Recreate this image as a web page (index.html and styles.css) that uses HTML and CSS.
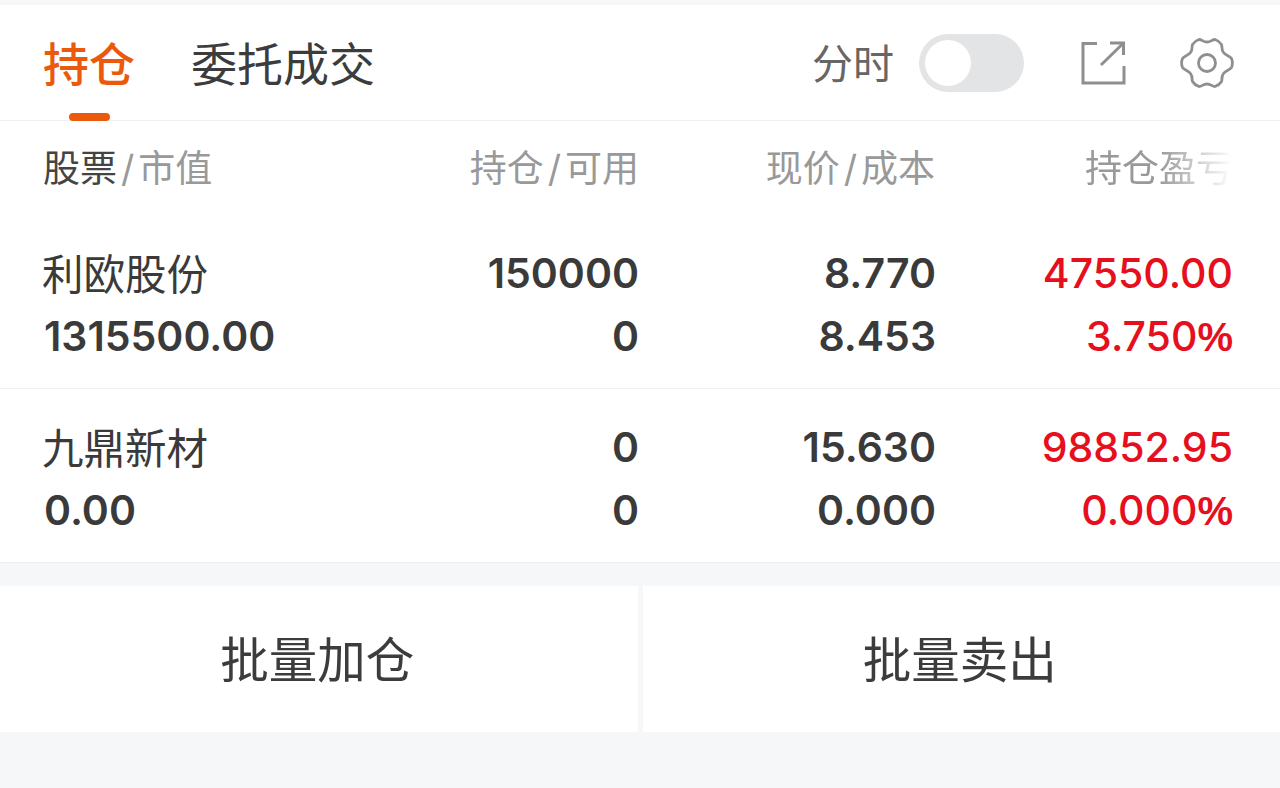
FILE: index.html
```html
<!DOCTYPE html>
<html lang="zh-CN">
<head>
<meta charset="utf-8">
<title>持仓</title>
<link rel="stylesheet" href="styles.css">
</head>
<body>
<div class="page">
  <header class="tabs">
    <div class="tab-list">
      <div class="tab active">持仓<span class="underline"></span></div>
      <div class="tab">委托成交</div>
    </div>
    <div class="tools">
      <span class="tool-label">分时</span>
      <span class="switch"><span class="knob"></span></span>
      <svg class="icon-share" width="46" height="46" viewBox="0 0 46 46" fill="none" stroke="#8f8f8f" stroke-width="3">
        <path d="M17 3.500H3V43H44V26"/>
        <path d="M21 25L43 3.500M30 3H43.500V15"/>
      </svg>
      <svg class="icon-gear" width="54" height="52" viewBox="0 0 54 52" fill="none" stroke="#8f8f8f" stroke-width="2.800" stroke-linejoin="round">
        <path d="M19 2.500C22 2.500 23 5 27 5C31 5 32 2.500 35 2.500C38 3.500 40 5 41.500 7.500C42.500 10 41 12 43.500 15.500C45.500 18.500 50 19 51.500 21.500C52.500 24 52.500 28 51.500 30.500C50 33 45.500 33.500 43.500 36.500C41 40 42.500 42 41.500 44.500C40 47 38 48.500 35 49.500C32 49.500 31 47 27 47C23 47 22 49.500 19 49.500C16 48.500 14 47 12.500 44.500C11.500 42 13 40 10.500 36.500C8.500 33.500 4 33 2.500 30.500C1.500 28 1.500 24 2.500 21.500C4 19 8.500 18.500 10.500 15.500C13 12 11.500 10 12.500 7.500C14 5 16 3.500 19 2.500Z"/>
        <circle cx="27" cy="26" r="8.500"/>
      </svg>
    </div>
  </header>
  <section class="holdings">
    <div class="row head">
      <div class="cell left"><span class="strong">股票</span><span class="sep">/</span>市值</div>
      <div class="cell c2">持仓<span class="sep">/</span>可用</div>
      <div class="cell c3">现价<span class="sep">/</span>成本</div>
      <div class="cell c4 fade">持仓盈亏</div>
    </div>
    <div class="stock first">
      <div class="line">
        <div class="cell left name">利欧股份</div>
        <div class="cell c2">150000</div>
        <div class="cell c3">8.770</div>
        <div class="cell c4 red">47550.00</div>
      </div>
      <div class="line">
        <div class="cell left">1315500.00</div>
        <div class="cell c2">0</div>
        <div class="cell c3">8.453</div>
        <div class="cell c4 red">3.750<span class="pct">%</span></div>
      </div>
    </div>
    <div class="stock">
      <div class="line">
        <div class="cell left name">九鼎新材</div>
        <div class="cell c2">0</div>
        <div class="cell c3">15.630</div>
        <div class="cell c4 red">98852.95</div>
      </div>
      <div class="line">
        <div class="cell left">0.00</div>
        <div class="cell c2">0</div>
        <div class="cell c3">0.000</div>
        <div class="cell c4 red">0.000<span class="pct">%</span></div>
      </div>
    </div>
  </section>
  <div class="actions">
    <div class="action">批量加仓</div>
    <div class="action">批量卖出</div>
  </div>
</div>
</body>
</html>
```
FILE: styles.css
```css
* { box-sizing: border-box; }
html, body { margin: 0; padding: 0; }
body {
  width: 1280px;
  height: 788px;
  overflow: hidden;
  background: #f6f7f9;
  font-family: "Inter", "Noto Sans CJK SC", sans-serif;
  color: #333;
}
.page { padding-top: 5px; height: 788px; }
.tabs {
  height: 116px;
  background: #fff;
  border-bottom: 1px solid #f0f0f0;
  display: flex;
  justify-content: space-between;
  padding: 0 46px 0 43px;
}
.tab-list { display: flex; gap: 56px; }
.tab {
  position: relative;
  font-size: 46px;
  line-height: 118px;
  height: 116px;
  color: #3c3c3c;
}
.tab.active { color: #eb5a0c; font-weight: 500; }
.underline {
  position: absolute;
  left: 26px;
  bottom: 0;
  width: 41px;
  height: 8px;
  border-radius: 4px;
  background: #eb5a0c;
}
.tools { display: flex; align-items: center; }
.tool-label { font-size: 41px; color: #666; margin-right: 25px; padding-bottom: 4px; }
.switch {
  width: 105px;
  height: 58px;
  border-radius: 29px;
  background: #e3e4e6;
  padding: 6px;
  margin-right: 56px;
}
.knob { display: block; width: 46px; height: 46px; border-radius: 50%; background: #fff; }
.icon-share { margin-right: 54px; margin-top: 1px; }
.row, .line { display: flex; align-items: center; padding-left: 44px; padding-right: 47px; }
.holdings { background: #fff; border-bottom: 1px solid #eceef0; }
.head { height: 98px; font-size: 37px; color: #999; padding-left: 43px; padding-bottom: 8px; }
.strong { color: #444; }
.sep { margin: 0 4px; color: #999; }
.cell { white-space: nowrap; }
.left { flex: 1 1 0; }
.c2, .c3, .c4 { text-align: right; }
.c2 { width: 320px; margin-left: -300px; }
.c3 { width: 297px; }
.c4 { width: 296px; }
.row .c2 { margin-right: -1px; }
.row .c3 { margin-right: 2px; }
.line .c3 { margin-right: 1px; }
.fade {
  -webkit-mask-image: linear-gradient(to right, #000 75%, transparent 100%);
  mask-image: linear-gradient(to right, #000 75%, transparent 100%);
}
.stock { font-size: 41px; font-weight: 600; color: #3a3a3a; padding-top: 26px; height: 173px; }
.stock.first { border-bottom: 1px solid #f0f0f0; height: 170px; padding-top: 22px; }
.line { height: 63px; }
.name { font-weight: 400; font-size: 41.500px; margin-left: -2px; margin-right: 2px; padding-bottom: 1px; }
.red { color: #e60f1e; font-weight: 500; }
.pct { font-family: "Liberation Sans", sans-serif; font-size: 40px; font-weight: 700; }
.actions { display: flex; gap: 5px; margin-top: 23px; }
.action {
  flex: 1 1 0;
  height: 146px;
  background: #fff;
  font-size: 48.500px;
  line-height: 149px;
  text-align: center;
  color: #3c3c3c;
  padding-right: 3px;
}
```
